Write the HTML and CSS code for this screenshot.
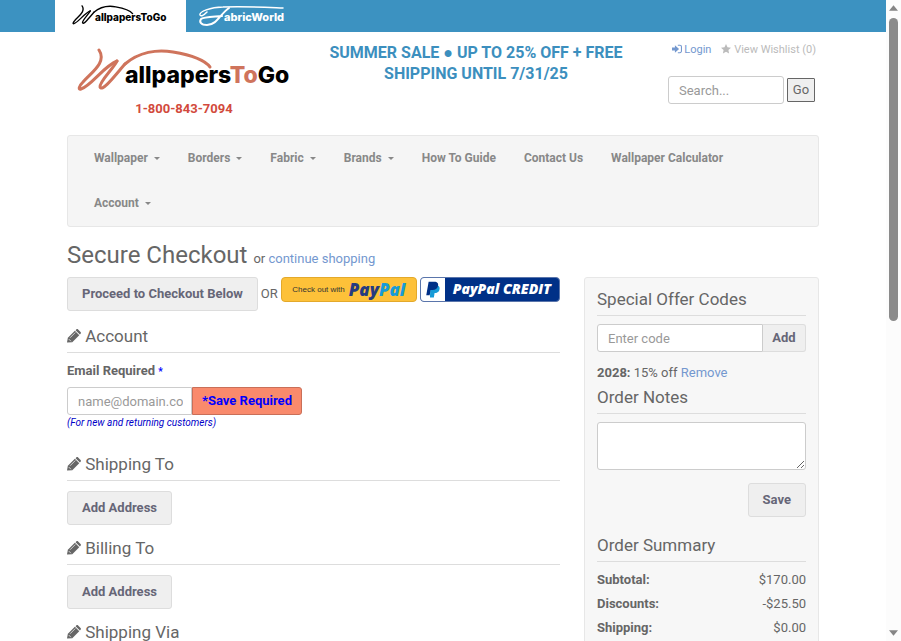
FILE: index.html
```
<!DOCTYPE html>
<html lang="en">
<head>
  <meta charset="UTF-8">
  <meta name="viewport" content="width=device-width, initial-scale=1">
  <title>Secure Checkout - WallpapersToGo</title>
  <link rel="stylesheet" href="styles.css">
</head>
<body>

  <!-- Shared icons -->
  <svg class="icon-defs" aria-hidden="true">
    <symbol id="pencil" viewBox="0 0 16 16">
      <path fill="currentColor" d="M0 15.500l1-5.500L9 2l5 5-8 8z"/>
      <path fill="currentColor" d="M9.800 1.300l.8-.8c.6-.6 1.500-.6 2.100 0l2.800 2.800c.6.6.6 1.500 0 2.100l-.8.8z"/>
      <path stroke="#fff" stroke-width=".8" fill="none" d="M3.500 10l6-6M2 11.500l2.500 2.500"/>
    </symbol>
    <symbol id="swoosh" viewBox="0 0 136 44">
      <g fill="none" stroke="currentColor" stroke-linecap="round" stroke-linejoin="round">
        <path stroke-width="3" d="M22 2C30 14 15 24 6 34C2 38 1 42 4 41C14 38 27 18 40 13"/>
        <path stroke-width="3" d="M40 13C36 21 22 34 23 39C25 45 40 25 48 16"/>
        <path stroke-width="3" d="M48 16C62 4 80 1 96 4C114 7 127 11 133 19"/>
      </g>
    </symbol>
  </svg>

  <div class="page">
    <div class="topbar">
      <div class="container topbar-tabs">
        <a href="#" class="tab active">
          <svg class="tab-swoosh"><use href="#swoosh"/></svg>
          <span class="tab-text">allpapersToGo</span>
        </a>
        <a href="#" class="tab fabric">
          <svg class="fabric-swoosh" viewBox="0 0 86 22" fill="none" stroke="currentColor" stroke-width="1.500" stroke-linecap="round">
            <path d="M85 3C62 2 44 1 25 2C12 2 1 7 2 10C3 12 6 10 9 7"/>
            <path stroke-width="2" d="M31 3C23 8 19 20 9 20C3 20 1 17 3 14C5 12 11 12 24 11"/>
          </svg>
          <span class="tab-text">abricWorld</span>
        </a>
      </div>
    </div>

    <div class="container">
      <header class="header">
        <div class="brand">
          <a href="#" class="logo">
            <svg class="logo-swoosh"><use href="#swoosh"/></svg>
            <span class="logo-text">allpapers<span class="logo-accent">To</span>Go</span>
          </a>
          <div class="phone">1-800-843-7094</div>
        </div>
        <div class="promo">SUMMER SALE ● UP TO 25% OFF + FREE SHIPPING UNTIL 7/31/25</div>
        <div class="tools">
          <div class="user-links">
            <a href="#">
              <svg class="small-icon" viewBox="0 0 12 12" fill="currentColor"><path d="M0 4.200h3.500V1.500L8.500 6l-5 4.500V7.800H0z"/><path d="M7 1h2.500C11 1 12 2 12 3.500v5c0 1.500-1 2.500-2.500 2.500H7V9.800h2.500c.8 0 1.200-.5 1.200-1.300v-5c0-.8-.4-1.300-1.200-1.300H7z"/></svg>
              Login</a>
            <a href="#" class="muted">
              <svg class="small-icon" viewBox="0 0 12 12" fill="currentColor"><path d="M6 0l1.800 3.900 4.200.5-3.100 2.900.8 4.200L6 9.400l-3.700 2.100.8-4.200L0 4.400l4.200-.5z"/></svg>
              View Wishlist (0)</a>
          </div>
          <form class="search">
            <input type="text" class="form-control" placeholder="Search..." aria-label="Search">
            <button type="button" class="go">Go</button>
          </form>
        </div>
      </header>

      <nav class="navbar">
        <a href="#">Wallpaper <span class="caret"></span></a>
        <a href="#">Borders <span class="caret"></span></a>
        <a href="#">Fabric <span class="caret"></span></a>
        <a href="#">Brands <span class="caret"></span></a>
        <a href="#">How To Guide</a>
        <a href="#">Contact Us</a>
        <a href="#">Wallpaper Calculator</a>
        <a href="#">Account <span class="caret"></span></a>
      </nav>

      <h1>Secure Checkout <small>or <a href="#">continue shopping</a></small></h1>

      <div class="columns">
        <main>
          <div class="pay-options">
            <button type="button" class="btn">Proceed to Checkout Below</button>
            <span class="or">OR</span>
            <button type="button" class="paypal">
              <span class="paypal-label">Check out with</span>
              <span class="paypal-word">Pay<span>Pal</span></span>
            </button>
            <button type="button" class="credit">
              <span class="credit-mark">
                <svg viewBox="0 0 16 19">
                  <path fill="#179bd7" d="M5 5h8.500c2 1 2.500 3 1.800 5-.8 2.500-2.800 3.500-5.500 3.500L9 18.500H4.500z"/>
                  <path fill="#003087" d="M3 .5h6.500c3.500 0 5 2 4.200 5-.8 3.200-3 4.500-6.200 4.500H5.200l-1 6H.3z"/>
                </svg>
              </span>
              <span class="credit-word">PayPal CREDIT</span>
            </button>
          </div>

          <h2><svg class="pencil"><use href="#pencil"/></svg> Account</h2>
          <div class="account">
            <label for="email">Email Required <span class="required">*</span></label>
            <div class="input-group email-group">
              <input type="email" id="email" class="form-control" placeholder="name@domain.com">
              <button type="button" class="btn-required">*Save Required</button>
            </div>
            <div class="hint">(For new and returning customers)</div>
          </div>

          <h2><svg class="pencil"><use href="#pencil"/></svg> Shipping To</h2>
          <button type="button" class="btn">Add Address</button>

          <h2><svg class="pencil"><use href="#pencil"/></svg> Billing To</h2>
          <button type="button" class="btn">Add Address</button>

          <h2><svg class="pencil"><use href="#pencil"/></svg> Shipping Via</h2>
        </main>

        <aside class="sidebar">
          <h2>Special Offer Codes</h2>
          <div class="input-group">
            <input type="text" class="form-control" placeholder="Enter code" aria-label="Offer code">
            <button type="button" class="btn-add">Add</button>
          </div>
          <div class="offer"><b>2028:</b> 15% off <a href="#">Remove</a></div>

          <h2>Order Notes</h2>
          <textarea class="form-control notes" aria-label="Order notes"></textarea>
          <div class="save-row"><button type="button" class="btn">Save</button></div>

          <h2>Order Summary</h2>
          <table class="summary">
            <tr><th scope="row">Subtotal:</th><td>$170.00</td></tr>
            <tr><th scope="row">Discounts:</th><td>-$25.50</td></tr>
            <tr><th scope="row">Shipping:</th><td>$0.00</td></tr>
          </table>
        </aside>
      </div>
    </div>
  </div>

  <div class="scrollbar" aria-hidden="true">
    <svg viewBox="0 0 10 6"><path d="M0 6l5-6 5 6z"/></svg>
    <div class="track"><div class="thumb"></div></div>
    <svg viewBox="0 0 10 6"><path d="M0 0l5 6 5-6z"/></svg>
  </div>

</body>
</html>
```

FILE: styles.css
```
* {
  box-sizing: border-box;
}
body {
  display: flex;
  height: 100vh;
  margin: 0;
  overflow: hidden;
  font-family: Roboto, sans-serif;
  font-size: 13px;
  line-height: 20px;
  color: #666;
  background: #fff;
}
a {
  color: #7498cf;
  text-decoration: none;
}
button,
input,
textarea {
  font: inherit;
  color: inherit;
}
button {
  cursor: pointer;
}
.icon-defs {
  display: none;
}
.page {
  flex: 1;
  min-width: 0;
  overflow: hidden;
}
.container {
  max-width: 776px;
  margin: 0 auto;
  padding: 0 12px;
}

/* Top bar */
.topbar {
  background: #3c92c1;
}
.topbar-tabs {
  display: flex;
  padding: 0;
}
.tab {
  position: relative;
  width: 131px;
  height: 32px;
  color: #fff;
}
.tab.active {
  background: #fff;
  color: #000;
}
.tab svg {
  position: absolute;
  top: 5px;
  left: 17px;
  width: 62px;
  height: 20px;
}
.tab .fabric-swoosh {
  left: 12px;
  width: 86px;
  height: 22px;
}
.tab-text {
  position: absolute;
  top: 8px;
  left: 40px;
  font: 800 10px/18px Inter, sans-serif;
}
.fabric .tab-text {
  left: 38px;
  font-size: 11px;
}

/* Header */
.header {
  display: grid;
  grid-template-columns: 234px 1fr 168px;
  height: 103px;
}
.brand {
  padding-top: 14px;
  text-align: center;
}
.logo {
  display: block;
  position: relative;
  height: 53px;
  color: #000;
}
.logo-swoosh {
  position: absolute;
  top: 2px;
  left: 10px;
  width: 136px;
  height: 44px;
  color: #cf745c;
}
.logo-text {
  position: absolute;
  top: 16px;
  left: 58px;
  font: 800 23px/26px Inter, sans-serif;
}
.logo-accent {
  color: #cf745c;
}
.phone {
  font-weight: 700;
  color: #d24a3c;
}
.promo {
  padding: 10px 24px;
  font-size: 16px;
  font-weight: 700;
  line-height: 21px;
  text-align: center;
  color: #3c8fbe;
}
.user-links {
  display: flex;
  justify-content: flex-end;
  gap: 10px;
  padding: 8px 3px 0 0;
  font-size: 11px;
  white-space: nowrap;
}
.user-links .muted {
  color: #bbb;
}
.small-icon {
  width: 10px;
  height: 10px;
  vertical-align: -1px;
}
.search {
  display: flex;
  justify-content: flex-end;
  align-items: center;
  gap: 3px;
  padding: 16px 4px 0 0;
}
.search .form-control {
  width: 116px;
}
.go {
  width: 28px;
  height: 24px;
  padding: 0;
  border: 1px solid #666;
  border-radius: 1px;
  background: #efefef;
}
.form-control {
  height: 28px;
  min-width: 0;
  padding: 4px 8px 4px 10px;
  border: 1px solid #ccc;
  border-radius: 3px;
  background: #fff;
}
.form-control::placeholder {
  color: #999;
}

/* Navigation */
.navbar {
  display: flex;
  flex-wrap: wrap;
  padding: 0 12px;
  border: 1px solid #e7e7e7;
  border-radius: 3px;
  background: #f5f5f5;
}
.navbar a {
  padding: 0 14px;
  font-size: 12px;
  font-weight: 700;
  line-height: 45px;
  color: #888;
}
.caret {
  display: inline-block;
  margin-left: 3px;
  border: 3px solid transparent;
  border-top-color: #888;
  border-bottom: 0;
  vertical-align: middle;
}

/* Checkout */
h1,
h2 {
  margin: 0;
  font-weight: 400;
}
h1 {
  padding: 13px 0 3px;
  font-size: 24px;
  line-height: 30px;
}
h1 small {
  font-size: 13px;
}
h2 {
  margin: 13px 0 10px;
  padding-bottom: 6px;
  border-bottom: 1px solid #ddd;
  font-size: 17px;
  line-height: 20px;
}
.pencil {
  width: 14px;
  height: 14px;
  vertical-align: -1px;
}
.columns {
  display: grid;
  grid-template-columns: minmax(0, 493fr) minmax(0, 235fr);
  gap: 24px;
}
.btn {
  height: 34px;
  padding: 0 14px;
  border: 1px solid #ddd;
  border-radius: 3px;
  background: #efefef;
  font-weight: 700;
  white-space: nowrap;
  color: #667;
}
.pay-options {
  display: flex;
  align-items: flex-start;
  gap: 3px;
  padding-bottom: 2px;
}
.or {
  padding-top: 7px;
}
.paypal {
  display: flex;
  align-items: center;
  justify-content: center;
  gap: 4px;
  width: 136px;
  height: 25px;
  padding: 0;
  border: 1px solid #e3a92b;
  border-radius: 4px;
  background: #fdc139;
}
.paypal-label {
  font: 8px/20px "Liberation Sans", sans-serif;
  color: #333;
}
.paypal-word {
  font: italic 800 17px/22px "Open Sans", sans-serif;
  color: #253b80;
}
.paypal-word span {
  color: #179bd7;
}
.credit {
  display: flex;
  width: 140px;
  height: 25px;
  padding: 0;
  overflow: hidden;
  border: 1px solid #5a75ab;
  border-radius: 4px;
  background: #003087;
}
.credit-mark {
  display: flex;
  align-items: center;
  justify-content: center;
  width: 24px;
  height: 100%;
  background: #fff;
}
.credit-mark svg {
  width: 14px;
  height: 17px;
}
.credit-word {
  flex: 1;
  font: italic 800 14px/22px "Open Sans", sans-serif;
  color: #fff;
}
.account {
  padding-bottom: 11px;
}
label {
  display: block;
  margin-bottom: 7px;
  font-weight: 700;
  line-height: 16px;
}
.required {
  font-size: 10px;
  color: #00f;
}
.input-group {
  display: flex;
}
.input-group .form-control {
  flex: 1;
  border-radius: 3px 0 0 3px;
}
.email-group {
  width: 235px;
}
.btn-required {
  width: 110px;
  padding: 0;
  border: 1px solid #c96f58;
  border-radius: 0 3px 3px 0;
  background: #f98a6c;
  font-weight: 700;
  color: #00f;
}
.hint {
  font-size: 10px;
  font-style: italic;
  line-height: 15px;
  color: #0000c8;
}

/* Sidebar */
.sidebar {
  padding: 11px 12px;
  border: 1px solid #e7e7e7;
  border-radius: 3px;
  background: #f7f7f7;
}
.sidebar h2 {
  margin: 0 0 8px;
}
.btn-add {
  width: 43px;
  padding: 0;
  border: 1px solid #ddd;
  border-left: 0;
  border-radius: 0 3px 3px 0;
  background: #efefef;
  font-weight: 700;
  color: #667;
}
.offer {
  padding: 11px 0 4px;
}
.notes {
  display: block;
  width: 100%;
  height: 48px;
}
.save-row {
  display: flex;
  justify-content: flex-end;
  padding: 13px 0 18px;
}
.summary {
  width: 100%;
  border-spacing: 0;
}
.summary th,
.summary td {
  padding: 0 0 4px;
}
.summary th {
  text-align: left;
}
.summary td {
  text-align: right;
}

/* Scrollbar */
.scrollbar {
  display: flex;
  flex-direction: column;
  align-items: center;
  width: 15px;
  padding: 5px 0;
  background: #fcfcfc;
}
.scrollbar svg {
  width: 9px;
  height: 6px;
  fill: #858585;
}
.track {
  flex: 1;
  padding: 7px 0;
}
.thumb {
  width: 9px;
  height: 50%;
  border-radius: 5px;
  background: #8b8b8b;
}
```
